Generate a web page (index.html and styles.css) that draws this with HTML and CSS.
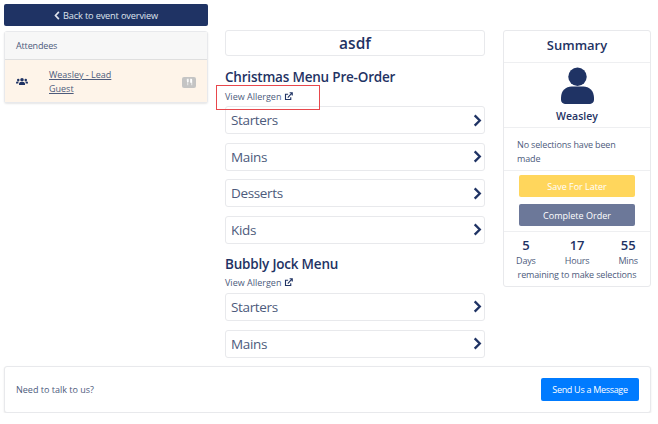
FILE: index.html
```html
<!DOCTYPE html>
<html lang="en">
<head>
    <meta charset="UTF-8">
    <title>Menu selections</title>
    <link rel="stylesheet" href="styles.css">
</head>
<body>
    <div class="columns">
        <div class="left">
            <a class="back-btn">
                <svg class="back-icon" viewBox="0 0 8 12"><path d="M6.5 1.2 2 6l4.500 4.800" fill="none" stroke="currentColor" stroke-width="2.200"/></svg>
                Back to event overview
            </a>
            <div class="card attendees">
                <div class="attendees-head">Attendees</div>
                <div class="attendee">
                    <svg class="group-icon" viewBox="0 0 24 16" fill="#1f3364">
                        <circle cx="12" cy="4.500" r="3.500"/>
                        <circle cx="4.500" cy="5" r="2.500"/>
                        <circle cx="19.500" cy="5" r="2.500"/>
                        <path d="M6 15v-2.500C6 10 8 9 10 9h4c2 0 4 1 4 3.500V15z"/>
                        <path d="M0 12v-1.500C0 9 1.500 8 3 8h2.500C5 9 4.500 10.500 4.500 12z"/>
                        <path d="M24 12v-1.500C24 9 22.500 8 21 8h-2.500c.500 1 1 2.500 1 4z"/>
                    </svg>
                    <a class="attendee-name">Weasley - Lead Guest</a>
                    <span class="meal-badge">
                        <svg viewBox="0 0 10 12" fill="#fff"><path d="M1 1v3.500c0 .800.500 1.300 1 1.500v5h1V6c.500-.200 1-.700 1-1.500V1H3.400v3h-.300V1h-.300v3h-.300V1z"/><path d="M6 1h1.800C8.500 1 9 1.500 9 2.500V11H8V7H6z"/></svg>
                    </span>
                </div>
            </div>
        </div>

        <div class="middle">
            <div class="card event-name">asdf</div>

            <div class="menu">
                <h2 class="menu-title">Christmas Menu Pre-Order</h2>
                <a class="allergen">View Allergen
                    <svg class="ext-icon" viewBox="0 0 12 12"><path d="M9 7v3H2V3h3.500M5 7.500 10.500 1.500M7.500 1H11v3.500" fill="none" stroke="currentColor" stroke-width="1.500"/></svg>
                </a>
                <div class="highlight"></div>
                <div class="card course">Starters <svg class="chevron" viewBox="0 0 10 14"><path d="M2.500 1.500 8 7l-5.500 5.500" fill="none" stroke="currentColor" stroke-width="2.500"/></svg></div>
                <div class="card course">Mains <svg class="chevron" viewBox="0 0 10 14"><path d="M2.500 1.500 8 7l-5.500 5.500" fill="none" stroke="currentColor" stroke-width="2.500"/></svg></div>
                <div class="card course">Desserts <svg class="chevron" viewBox="0 0 10 14"><path d="M2.500 1.500 8 7l-5.500 5.500" fill="none" stroke="currentColor" stroke-width="2.500"/></svg></div>
                <div class="card course">Kids <svg class="chevron" viewBox="0 0 10 14"><path d="M2.500 1.500 8 7l-5.500 5.500" fill="none" stroke="currentColor" stroke-width="2.500"/></svg></div>
            </div>

            <div class="menu">
                <h2 class="menu-title">Bubbly Jock Menu</h2>
                <a class="allergen">View Allergen
                    <svg class="ext-icon" viewBox="0 0 12 12"><path d="M9 7v3H2V3h3.500M5 7.500 10.500 1.500M7.500 1H11v3.500" fill="none" stroke="currentColor" stroke-width="1.500"/></svg>
                </a>
                <div class="card course">Starters <svg class="chevron" viewBox="0 0 10 14"><path d="M2.500 1.500 8 7l-5.500 5.500" fill="none" stroke="currentColor" stroke-width="2.500"/></svg></div>
                <div class="card course">Mains <svg class="chevron" viewBox="0 0 10 14"><path d="M2.500 1.500 8 7l-5.500 5.500" fill="none" stroke="currentColor" stroke-width="2.500"/></svg></div>
            </div>
        </div>

        <div class="card summary">
            <div class="summary-title">Summary</div>
            <div class="summary-person">
                <svg class="person-icon" viewBox="0 0 34 38" fill="#1f3364">
                    <circle cx="17" cy="10" r="9.500"/>
                    <path d="M0 32c0-8 5-12 11-12h12c6 0 11 4 11 12v2c0 2-2 4-4 4H4c-2 0-4-2-4-4z"/>
                </svg>
                <div class="person-name">Weasley</div>
            </div>
            <div class="summary-text">No selections have been made</div>
            <div class="summary-actions">
                <button class="btn-save">Save For Later</button>
                <button class="btn-complete">Complete Order</button>
            </div>
            <div class="countdown">
                <div class="count-row">
                    <div class="count"><b>5</b>Days</div>
                    <div class="count"><b>17</b>Hours</div>
                    <div class="count"><b>55</b>Mins</div>
                </div>
                <div class="remaining">remaining to make selections</div>
            </div>
        </div>
    </div>

    <div class="card footer">
        <span>Need to talk to us?</span>
        <button class="btn-message">Send Us a Message</button>
    </div>
</body>
</html>
```

FILE: styles.css
```css
body {
    margin: 0;
    padding: 4px 7px 0 4px;
    font-family: "Open Sans", "Noto Sans", sans-serif;
    font-size: 9px;
    letter-spacing: -0.15px;
    color: #4d5b7c;
    background-color: #fff;
}
.card {
    background-color: #fff;
    border: 1px solid #e8e9ec;
    border-radius: 3px;
    box-sizing: border-box;
}
.columns {
    display: grid;
    grid-template-columns: 204px 260px 149px;
    column-gap: 17px;
    align-items: start;
}
.back-btn {
    display: flex;
    align-items: center;
    justify-content: center;
    gap: 3px;
    height: 22px;
    background-color: #1f3364;
    color: #dfe3ec;
    border-radius: 2px;
    font-size: 9.200px;
}
.back-icon {
    width: 6px;
    height: 9px;
}
.attendees {
    margin-top: 5px;
    box-shadow: 0 1px 2px rgba(0, 0, 0, 0.1);
}
.attendees-head {
    height: 28px;
    padding-left: 11px;
    line-height: 27px;
    box-sizing: border-box;
    background-color: #f7f7f7;
    border-bottom: 1px solid #dfdfdf;
}
.attendee {
    display: flex;
    align-items: center;
    height: 42px;
    padding: 0 11px;
    background-color: #fef4e9;
}
.group-icon {
    width: 12px;
    height: 9px;
    flex-shrink: 0;
}
.attendee-name {
    width: 75px;
    margin-left: 21px;
    padding-top: 1px;
    line-height: 14px;
    letter-spacing: 0;
    text-decoration: underline;
}
.meal-badge {
    display: flex;
    align-items: center;
    justify-content: center;
    width: 14px;
    height: 11px;
    margin-left: auto;
    margin-top: 2px;
    background-color: #c4c4c4;
    border-radius: 2px;
}
.meal-badge svg {
    width: 7px;
    height: 8px;
}
.middle {
    padding-top: 26px;
}
.event-name {
    height: 26px;
    line-height: 25px;
    text-align: center;
    font-size: 15.500px;
    font-weight: 600;
    letter-spacing: 0;
    color: #1f3364;
}
.menu {
    position: relative;
}
.menu-title {
    margin: 11px 0 0;
    height: 20px;
    line-height: 20px;
    font-size: 13.500px;
    font-weight: 600;
    letter-spacing: -0.2px;
    color: #1f3364;
}
.menu + .menu .menu-title {
    margin-top: 10px;
}
.allergen {
    display: flex;
    align-items: center;
    gap: 3px;
    height: 18px;
    margin-bottom: 1px;
    letter-spacing: 0;
}
.ext-icon {
    width: 9px;
    height: 9px;
    color: #1f3364;
}
.highlight {
    position: absolute;
    left: -9px;
    top: 18px;
    width: 104px;
    height: 25px;
    border: 1px solid #e8474c;
    box-sizing: border-box;
}
.course {
    display: flex;
    align-items: center;
    justify-content: space-between;
    height: 28px;
    margin-bottom: 8.500px;
    padding: 0 2.500px 0 5px;
    font-size: 13.500px;
    letter-spacing: -0.35px;
}
.menu + .menu .course {
    margin-bottom: 9px;
}
.menu + .menu .course:last-child {
    margin-bottom: 8px;
}
.chevron {
    width: 10px;
    height: 13px;
    color: #1f3364;
}
.summary {
    margin-top: 26px;
    margin-left: 1px;
}
.summary-title {
    height: 32px;
    line-height: 29px;
    box-sizing: border-box;
    text-align: center;
    font-size: 13px;
    font-weight: 600;
    letter-spacing: 0;
    color: #1f3364;
    border-bottom: 1px solid #eeeff1;
}
.summary-person {
    display: flex;
    flex-direction: column;
    align-items: center;
    height: 65px;
    padding-top: 4px;
    box-sizing: border-box;
    border-bottom: 1px solid #eeeff1;
}
.person-icon {
    width: 33px;
    height: 37px;
}
.person-name {
    margin-top: 5px;
    font-size: 10.500px;
    font-weight: 600;
    letter-spacing: 0;
    color: #1f3364;
}
.summary-text {
    height: 43px;
    padding: 10px 13px 0;
    line-height: 14px;
    box-sizing: border-box;
    border-bottom: 1px solid #eeeff1;
}
.summary-actions {
    display: flex;
    flex-direction: column;
    gap: 7px;
    align-items: center;
    padding: 4px 0 5px;
    border-bottom: 1px solid #eeeff1;
}
.summary-actions button {
    width: 116px;
    height: 22px;
    border: none;
    border-radius: 2px;
    font-family: inherit;
    font-size: 9px;
    color: #fff;
}
.btn-save {
    background-color: #ffd65c;
}
.btn-complete {
    background-color: #6c7899;
}
.countdown {
    padding: 5px 12px 4px;
}
.count-row {
    display: flex;
    justify-content: space-between;
}
.count {
    display: flex;
    flex-direction: column;
    align-items: center;
    line-height: 14px;
}
.count b {
    font-size: 13px;
    font-weight: 600;
    line-height: 17px;
    letter-spacing: 0;
    color: #1f3364;
}
.remaining {
    text-align: center;
    line-height: 14px;
}
.footer {
    display: flex;
    align-items: center;
    justify-content: space-between;
    height: 47px;
    padding: 0 11px 0 11px;
    letter-spacing: 0;
    box-shadow: 0 1px 2px rgba(0, 0, 0, 0.1);
}
.btn-message {
    width: 98px;
    height: 23px;
    padding: 0;
    border: none;
    border-radius: 2px;
    background-color: #007bff;
    color: #fff;
    font-family: inherit;
    font-size: 9px;
    letter-spacing: -0.3px;
}
```
